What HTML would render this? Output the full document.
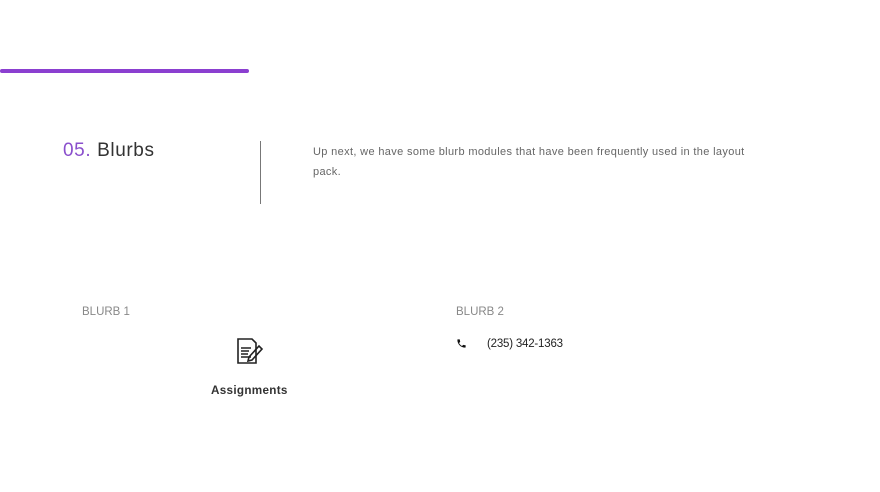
<!DOCTYPE html>
<html><head><style>
body{margin:0;width:880px;height:492px;background:#fff;position:relative;overflow:hidden;font-family:"Liberation Sans",sans-serif}
.a{position:absolute;white-space:nowrap}
</style></head><body>
<div class="a" style="left:0;top:69px;width:249px;height:4px;background:#8b3fd0;border-radius:2px"></div>
<div class="a" style="left:63px;top:140px;font-size:19px;color:#333;letter-spacing:.6px"><span style="color:#8a4fcc">05.</span> Blurbs</div>
<div class="a" style="left:260px;top:141px;width:1px;height:63px;background:#777"></div>
<div class="a" style="left:313px;top:142px;font-size:11px;line-height:20px;color:#666;white-space:normal;width:440px;letter-spacing:.35px">Up next, we have some blurb modules that have been frequently used in the layout pack.</div>
<div class="a" style="left:82px;top:306px;font-size:11.5px;color:#888">BLURB 1</div>
<div class="a" style="left:456px;top:306px;font-size:11.5px;color:#888">BLURB 2</div>
<svg class="a" style="left:236px;top:337px" width="28" height="28" viewBox="0 0 28 28" fill="none" stroke="#222" stroke-width="1.6">
<path d="M2 2h14l4 4v20H2z"/><path d="M5 11h10M5 14h8M5 17h7M5 20h10"/><path d="M13 20l10-11 3 3-10 11-4 1z"/></svg>
<div class="a" style="left:211px;top:384px;font-size:11.7px;font-weight:bold;color:#333;letter-spacing:.3px">Assignments</div>
<svg class="a" style="left:456px;top:338px" width="11" height="11" viewBox="0 0 24 24"><path fill="#111" d="M6.6 10.8c1.4 2.8 3.8 5.1 6.6 6.6l2.2-2.2c.3-.3.7-.4 1-.2 1.1.4 2.3.6 3.6.6.6 0 1 .4 1 1V20c0 .6-.4 1-1 1C10.6 21 3 13.4 3 4c0-.6.4-1 1-1h3.5c.6 0 1 .4 1 1 0 1.3.2 2.5.6 3.6.1.3 0 .7-.2 1z"/></svg>
<div class="a" style="left:487px;top:338px;font-size:11.5px;color:#222;letter-spacing:-.2px">(235) 342-1363</div>
</body></html>
